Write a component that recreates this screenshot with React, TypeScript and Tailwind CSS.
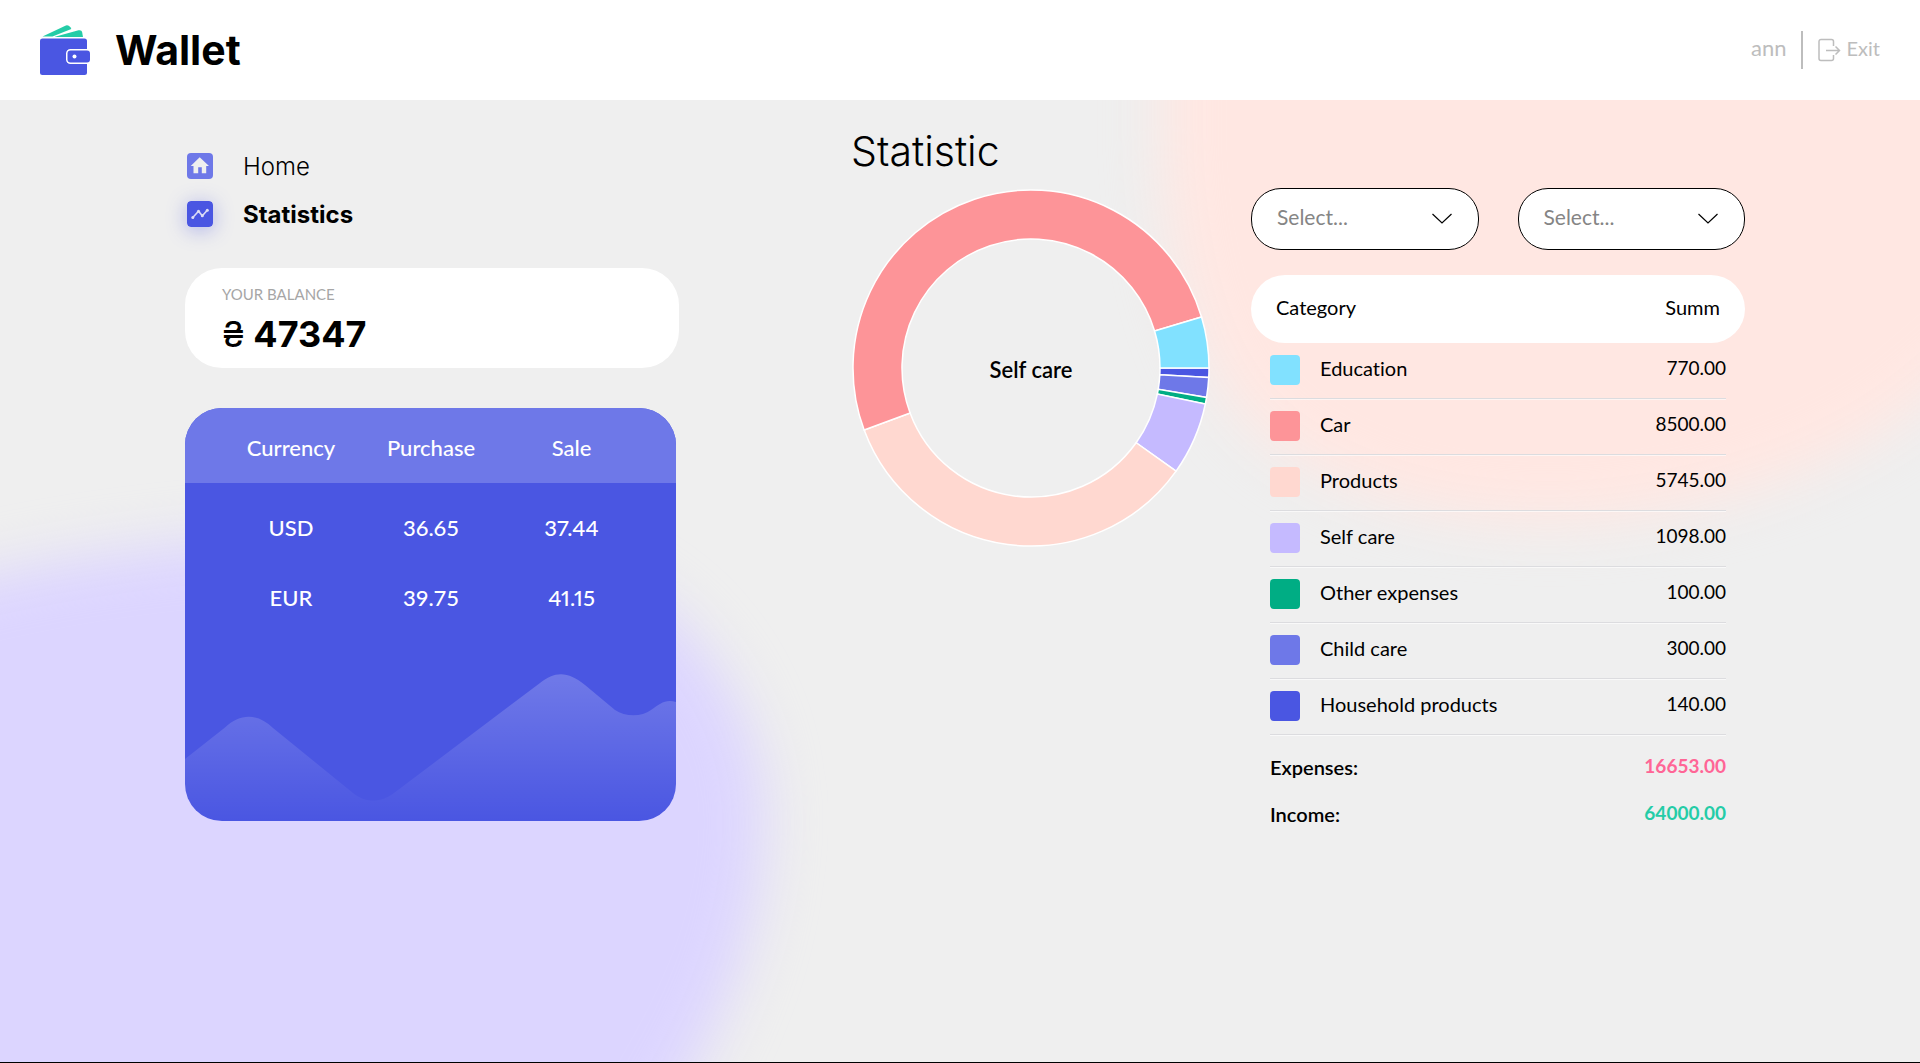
import React from 'react';

type Category = { name: string; sum: number; color: string };

const categories: Category[] = [
  { name: 'Education', sum: 770, color: '#81e1ff' },
  { name: 'Car', sum: 8500, color: '#fd9498' },
  { name: 'Products', sum: 5745, color: '#ffd8d0' },
  { name: 'Self care', sum: 1098, color: '#c5baff' },
  { name: 'Other expenses', sum: 100, color: '#00ad84' },
  { name: 'Child care', sum: 300, color: '#6e78e8' },
  { name: 'Household products', sum: 140, color: '#4a56e2' },
];

const rates = [
  { currency: 'USD', purchase: '36.65', sale: '37.44' },
  { currency: 'EUR', purchase: '39.75', sale: '41.15' },
];

function WalletLogo() {
  return (
    <svg className="size-[50px]" viewBox="0 0 50 50" aria-hidden="true">
      <path d="M2.5 11.5 24.8 0.9C27.6-.4 29.8.7 31.3 4L12.5 11.6Z" fill="#24cca7" />
      <path d="M15 11.8 38.5 5.3C40.5 4.8 41.8 5.6 42.2 7.4L43 12H15Z" fill="#24cca7" />
      <path
        d="M3 13.5H44.5A2.5 2.5 0 0 1 47 16V24H30.5A4.5 4.5 0 0 0 26 28.5V34.5A4.5 4.5 0 0 0 30.5 39H47V47.500A2.500 2.500 0 0 1 44.500 50H2.500A2.500 2.500 0 0 1 0 47.500V16A2.500 2.500 0 0 1 3 13.500Z"
        fill="#4a56e2"
      />
      <rect x="27.500" y="25.500" width="22.500" height="12" rx="3" fill="#4a56e2" />
      <circle cx="34.500" cy="31.500" r="2" fill="#fff" />
    </svg>
  );
}

function ExitIcon() {
  return (
    <svg className="h-6 w-6" viewBox="0 0 24 24" fill="none" stroke="#bdbdbd" strokeWidth="1.500" aria-hidden="true">
      <path d="M16.500 8V3.500A2 2 0 0 0 14.500 1.500H4A2 2 0 0 0 2 3.500V20.500A2 2 0 0 0 4 22.500H14.500A2 2 0 0 0 16.500 20.500V17" />
      <path d="M9 12.500H22M18.500 8.500 22.500 12.500 18.500 16.500" />
    </svg>
  );
}

function HomeIcon() {
  return (
    <svg className="size-[26px]" viewBox="0 0 26 26" aria-hidden="true">
      <rect width="26" height="26" rx="4" fill="#6e78e8" />
      <path d="M12.700 4.300 22 12.900H19.200V20.300H14.800V14.300H11.200V20.300H6.500V12.900H3.700Z" fill="#efefef" />
    </svg>
  );
}

function StatisticsIcon() {
  return (
    <svg className="size-[26px] rounded shadow-[0_3px_20px_rgba(74,86,226,0.4)]" viewBox="0 0 26 26" aria-hidden="true">
      <rect width="26" height="26" rx="4" fill="#4a56e2" />
      <path d="M5.800 16.500 11.500 10.300 15.300 14.800 20.300 9.300" fill="none" stroke="#dcdcf5" strokeWidth="1.600" />
      <g fill="#dcdcf5">
        <circle cx="5.800" cy="16.500" r="1.500" />
        <circle cx="11.500" cy="10.300" r="1.500" />
        <circle cx="15.300" cy="14.800" r="1.500" />
        <circle cx="20.300" cy="9.300" r="1.500" />
      </g>
    </svg>
  );
}

function Backdrop() {
  return (
    <div className="pointer-events-none absolute inset-0 overflow-hidden" aria-hidden="true">
      <svg className="absolute bottom-0 left-0 overflow-visible blur-[27px]" width="780" height="563" viewBox="0 500 780 563">
        <path
          d="M-100 600C60 550 330 518 520 550C610 568 645 595 676 622C735 680 764 750 764 817C764 920 730 1000 697 1063L620 1200H-100Z"
          fill="#dcd5ff"
        />
      </svg>
      <svg className="absolute top-0 right-0 overflow-visible blur-[27px]" width="780" height="440" viewBox="1140 100 780 440">
        <path
          d="M1162 0V150C1168 300 1207 395 1276 445C1360 505 1470 525 1570 522C1700 517 1840 470 1920 405L2020 320V0Z"
          fill="#ffe7e2"
        />
      </svg>
    </div>
  );
}

function Wave() {
  return (
    <svg className="mt-[42px] block h-[147px] w-full" viewBox="0 0 491 147" preserveAspectRatio="none" aria-hidden="true">
      <defs>
        <linearGradient id="wave" x1="0" y1="0" x2="0" y2="1">
          <stop offset="0" stopColor="#fff" stopOpacity="0.21" />
          <stop offset="1" stopColor="#fff" stopOpacity="0" />
        </linearGradient>
      </defs>
      <path
        d="M0 85 40 53.500C55 39 73 39 88 54L168 119C180 129 196 129 209 119L355 9C370-3 383-3 400 11L430 36C440 43 457 43 466 36C475 30 480 25 491 28V147H0Z"
        fill="url(#wave)"
      />
    </svg>
  );
}

function Donut() {
  const total = categories.reduce((acc, c) => acc + c.sum, 0);
  const outer = 178;
  const inner = 129;
  const point = (r: number, a: number) => `${r * Math.cos(a)} ${r * Math.sin(a)}`;
  let angle = 0;
  const arcs = [...categories].reverse().map((c) => {
    const start = angle;
    const end = start + (c.sum / total) * Math.PI * 2;
    angle = end;
    const large = end - start > Math.PI ? 1 : 0;
    return {
      color: c.color,
      d: `M${point(outer, start)}A${outer} ${outer} 0 ${large} 1 ${point(outer, end)}L${point(inner, end)}A${inner} ${inner} 0 ${large} 0 ${point(inner, start)}Z`,
    };
  });
  return (
    <div className="relative grid aspect-square w-[360px] place-items-center">
      <svg className="absolute inset-0 size-full" viewBox="-180 -180 360 360" role="img" aria-label="Expenses by category">
        {arcs.map((a) => (
          <path key={a.color} d={a.d} fill={a.color} stroke="#fff" strokeWidth="1.500" />
        ))}
      </svg>
      <p className="relative pt-1 text-[22px] leading-7 font-semibold">Self care</p>
    </div>
  );
}

function Dropdown({ label }: { label: string }) {
  return (
    <div className="relative flex-1">
      <select
        aria-label={label}
        defaultValue=""
        className="h-[62px] w-full appearance-none rounded-[30px] border border-black bg-white px-[25px] pb-1 text-[21px] text-[#858585]"
      >
        <option value="">Select...</option>
      </select>
      <svg
        className="pointer-events-none absolute top-[25px] right-[27px] h-3 w-5"
        viewBox="0 0 20 12"
        fill="none"
        stroke="#000"
        strokeWidth="1.200"
        aria-hidden="true"
      >
        <path d="M.500 1 10 10 19.500 1" />
      </svg>
    </div>
  );
}

export default function App() {
  return (
    <div className="flex min-h-screen flex-col border-b border-black bg-[#efefef] font-['Lato',sans-serif] text-black [font-variant-ligatures:none]">
      <header className="relative z-10 flex h-[100px] items-center justify-between bg-white px-10">
        <a href="#home" className="flex items-center gap-[25px]">
          <WalletLogo />
          <span className="font-['Inter',sans-serif] text-[41px] leading-[50px] font-bold">Wallet</span>
        </a>
        <div className="flex items-center text-xl text-[#bdbdbd]">
          <span className="pb-1 text-[22px]">ann</span>
          <span className="mr-[14px] ml-[14px] h-[38px] w-[2px] bg-[#bdbdbd]" />
          <button type="button" className="flex items-center gap-[6px]">
            <ExitIcon />
            <span className="pb-1">Exit</span>
          </button>
        </div>
      </header>

      <main className="relative flex flex-1 items-start pr-[175px] pl-[185px]">
        <Backdrop />

        <aside className="relative w-[494px] shrink-0 pt-[52px]">
          <nav className="flex flex-col gap-[20px] pl-[2px] font-['Inter',sans-serif] text-2xl leading-7">
            <a href="#home" className="flex h-7 items-center gap-[30px] font-light">
              <HomeIcon />
              <span className="pt-0.5">Home</span>
            </a>
            <a href="#statistics" className="flex h-7 items-center gap-[30px] font-bold">
              <StatisticsIcon />
              <span className="pt-0.5">Statistics</span>
            </a>
          </nav>

          <section className="mt-10 h-[100px] rounded-[37px] bg-white px-[37px] pt-[15px]">
            <h2 className="text-[15px] leading-[22px] text-[#a6a6a6]">YOUR BALANCE</h2>
            <p className="font-['Inter',sans-serif] text-[36px] leading-[58px] font-bold">
              <span className="font-normal">₴</span> 47347
            </p>
          </section>

          <section className="mt-10 mr-[3px] overflow-hidden rounded-[37px] bg-[#4a56e2]">
            <table className="w-full table-fixed text-center text-[22px] font-medium text-white">
              <colgroup>
                <col className="w-[176px]" />
                <col className="w-[140px]" />
                <col />
              </colgroup>
              <thead className="bg-[#6e78e8]">
                <tr className="h-[75px]">
                  <th className="pt-1 pl-9 font-medium">Currency</th>
                  <th className="pt-1 font-medium">Purchase</th>
                  <th className="pt-1 pr-[34px] font-medium">Sale</th>
                </tr>
              </thead>
              <tbody>
                {rates.map((r) => (
                  <tr key={r.currency} className="h-[69px] first:h-[80px] first:*:pt-[9px]">
                    <td className="pl-9">{r.currency}</td>
                    <td>{r.purchase}</td>
                    <td className="pr-[34px] proportional-nums">{r.sale}</td>
                  </tr>
                ))}
              </tbody>
            </table>
            <Wave />
          </section>
        </aside>

        <section className="relative ml-[172px] flex-1 pt-[26px]">
          <h1 className="font-['Inter',sans-serif] text-[41px] leading-[50px] font-light">Statistic</h1>
          <div className="flex items-start gap-10 pt-[12px]">
            <Donut />
            <div className="min-w-0 flex-1">
              <div className="flex gap-[39px]">
                <Dropdown label="Month" />
                <Dropdown label="Year" />
              </div>
              <div className="mt-[25px] text-xl">
                <div className="flex h-[68px] items-center justify-between rounded-[34px] bg-white px-[25px] pb-1">
                  <span>Category</span>
                  <span>Summ</span>
                </div>
                <ul className="mx-[19px]">
                  {categories.map((c) => (
                    <li
                      key={c.name}
                      className="flex h-14 items-center gap-5 border-b border-[#dcdcdf] pb-px shadow-[0_1px_0_rgba(255,255,255,0.6)]"
                    >
                      <span className="size-[30px] rounded-sm" style={{ backgroundColor: c.color }} />
                      <span className="flex-1 pb-1">{c.name}</span>
                      <span className="pb-1 text-[19px]">{c.sum.toFixed(2)}</span>
                    </li>
                  ))}
                </ul>
                <dl className="mx-[19px] pt-[8px] font-semibold">
                  <div className="flex h-[47px] items-center justify-between">
                    <dt>Expenses:</dt>
                    <dd className="text-[19px] font-bold text-[#ff6596]">16653.00</dd>
                  </div>
                  <div className="flex h-[47px] items-center justify-between">
                    <dt>Income:</dt>
                    <dd className="text-[19px] font-bold text-[#24cca7]">64000.00</dd>
                  </div>
                </dl>
              </div>
            </div>
          </div>
        </section>
      </main>
    </div>
  );
}
